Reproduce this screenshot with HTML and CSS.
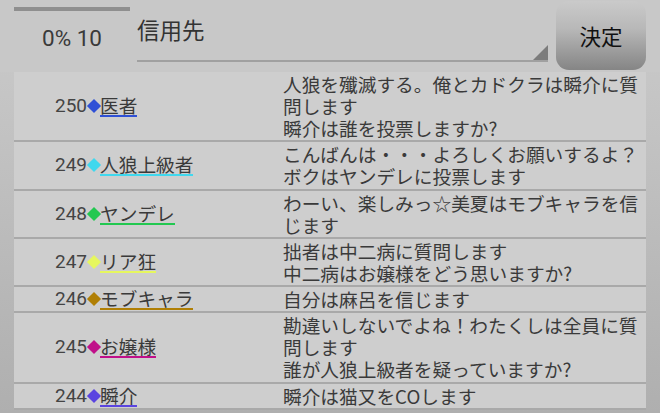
FILE: index.html
```html
<!DOCTYPE html>
<html lang="ja">
<head>
<meta charset="utf-8">
<link rel="stylesheet" href="styles.css">
</head>
<body>
<div class="topbar">
  <div class="progress">
    <div class="bar"></div>
    <div class="count">0% 10</div>
  </div>
  <div class="spinner">
    <div class="spinner-text">信用先</div>
    <div class="spinner-tri"></div>
  </div>
  <div class="button">決定</div>
</div>
<div class="list">
  <div class="row">
    <div class="who"><span class="num">250</span><span class="dia c1"></span><span class="name u1">医者</span></div>
    <div class="msg">人狼を殲滅する。俺とカドクラは瞬介に質<br>問します<br>瞬介は誰を投票しますか?</div>
  </div>
  <div class="row">
    <div class="who"><span class="num">249</span><span class="dia c2"></span><span class="name u2">人狼上級者</span></div>
    <div class="msg">こんばんは・・・よろしくお願いするよ？<br>ボクはヤンデレに投票します</div>
  </div>
  <div class="row">
    <div class="who"><span class="num">248</span><span class="dia c3"></span><span class="name u3">ヤンデレ</span></div>
    <div class="msg">わーい、楽しみっ☆美夏はモブキャラを信<br>じます</div>
  </div>
  <div class="row">
    <div class="who"><span class="num">247</span><span class="dia c4"></span><span class="name u4">リア狂</span></div>
    <div class="msg">拙者は中二病に質問します<br>中二病はお嬢様をどう思いますか?</div>
  </div>
  <div class="row">
    <div class="who"><span class="num">246</span><span class="dia c5"></span><span class="name u5">モブキャラ</span></div>
    <div class="msg">自分は麻呂を信じます</div>
  </div>
  <div class="row">
    <div class="who"><span class="num">245</span><span class="dia c6"></span><span class="name u6">お嬢様</span></div>
    <div class="msg">勘違いしないでよね！わたくしは全員に質<br>問します<br>誰が人狼上級者を疑っていますか?</div>
  </div>
  <div class="row">
    <div class="who"><span class="num">244</span><span class="dia c7"></span><span class="name u7">瞬介</span></div>
    <div class="msg">瞬介は猫又をCOします</div>
  </div>
</div>
</body>
</html>
```
FILE: styles.css
```css
html, body {
  margin: 0;
  padding: 0;
}
body {
  width: 660px;
  height: 413px;
  overflow: hidden;
  background: linear-gradient(to bottom, #c9c9c9 0px, #c6c6c6 80px, #afafaf 413px);
  font-family: Roboto, "Noto Sans CJK JP", sans-serif;
  color: #3a3a3a;
}
.topbar {
  display: flex;
  height: 72px;
  padding: 0 14px;
  background: #c8c8c8;
  box-sizing: border-box;
}
.progress {
  width: 116px;
  padding-top: 7px;
}
.bar {
  height: 4px;
  background: #8f8f8f;
}
.count {
  text-align: center;
  font-size: 22.5px;
  line-height: 26px;
  margin-top: 14px;
  color: #3a3a3a;
}
.spinner {
  flex: 1;
  margin-left: 7px;
  margin-right: 8px;
  height: 62px;
  border-bottom: 2px solid #a0a0a0;
  position: relative;
  box-sizing: border-box;
}
.spinner-text {
  font-size: 22.5px;
  line-height: 28px;
  padding-top: 17px;
  color: #333;
}
.spinner-tri {
  position: absolute;
  right: 0;
  bottom: 0;
  width: 0;
  height: 0;
  border-left: 15px solid transparent;
  border-bottom: 15px solid #7c7c7c;
}
.button {
  width: 90px;
  height: 69px;
  margin-top: 1px;
  border-radius: 13px;
  background: linear-gradient(to bottom, #cacaca 0%, #b8b8b8 40%, #858585 100%);
  display: flex;
  align-items: center;
  justify-content: center;
  font-size: 21.5px;
  color: #111;
  font-family: "Noto Sans CJK JP", sans-serif;
}
.list {
  margin: 0 14px;
  background: #cecece;
}
.row {
  display: flex;
  border-bottom: 2px solid #a9a9a9;
  padding: 1px 0 1.3px;
}
.who {
  width: 269px;
  padding-left: 41px;
  box-sizing: border-box;
  display: flex;
  align-items: center;
  font-size: 19px;
  color: #444;
}
.num {
  line-height: 22px;
}
.dia {
  display: inline-block;
  flex: none;
  width: 10px;
  height: 10px;
  margin: 0 1.5px 0 1.5px;
  transform: rotate(45deg);
}
.name {
  line-height: 20px;
  border-bottom: 2px solid;
  color: #3a3a3a;
  font-family: "Noto Sans CJK JP", sans-serif;
  font-size: 18.7px;
}
.msg {
  flex: 1;
  font-size: 18.7px;
  line-height: 22px;
  white-space: nowrap;
  font-family: "Noto Sans CJK JP", sans-serif;
  color: #3a3a3a;
}
.c1 { background: #2f50d6; }
.c2 { background: #3fd8ee; }
.c3 { background: #22c850; }
.c4 { background: #e6f75e; }
.c5 { background: #b07f05; }
.c6 { background: #c0108a; }
.c7 { background: #5a44e0; }
.u1 { border-color: #2f50d6; }
.u2 { border-color: #3fd8ee; }
.u3 { border-color: #22c850; }
.u4 { border-color: #e6f75e; }
.u5 { border-color: #b07f05; }
.u6 { border-color: #c0108a; }
.u7 { border-color: #5a44e0; }
```
